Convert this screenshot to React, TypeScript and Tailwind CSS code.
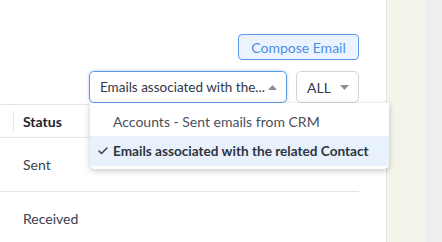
import { Check } from "lucide-react";

function Caret({ up }: { up?: boolean }) {
  return (
    <svg width="9" height="5" viewBox="0 0 9 5" className="shrink-0">
      {up ? <path d="M0 5 L4.5 0 L9 5 Z" fill="#8a8f96" /> : <path d="M0 0 L4.5 5 L9 0 Z" fill="#8a8f96" />}
    </svg>
  );
}

export default function App() {
  return (
    <div className="flex h-[242px] w-[442px] overflow-hidden font-['Lato',sans-serif] text-[#313949]">
      <div className="relative flex w-[387px] shrink-0 flex-col border-r border-[#e4e4e4] bg-white pt-[34px]">
        <div className="flex justify-end pr-[27px]">
          <button className="h-[26px] w-[121px] rounded-[4px] border border-[#5b9ae6] bg-[#eaf3fe] text-[14px] text-[#4a8fe3]">
            Compose Email
          </button>
        </div>

        <div className="mt-[11px] flex justify-end gap-[9px] pr-[27px]">
          <div className="relative">
            <div className="flex h-[32px] w-[198px] items-center justify-between rounded-[5px] border border-[#5b9ae6] pl-[10px] pr-[9px] text-[13.5px] shadow-[0_0_3px_rgba(74,143,227,0.5)]">
              <span className="whitespace-nowrap">Emails associated with the...</span>
              <Caret up />
            </div>
            <div className="absolute left-[1px] top-[32px] z-10 w-[299px] rounded-b-[5px] bg-white py-[3px] text-[14px] shadow-[0_2px_6px_rgba(0,0,0,0.22)]">
              <div className="flex h-[30px] items-center whitespace-nowrap pl-[23px] text-[#4b515c]">Accounts - Sent emails from CRM</div>
              <div className="flex h-[30px] items-center whitespace-nowrap bg-[#e8f1fc] pl-[7px] text-[13.6px] font-bold text-[#2f3542]">
                <Check size={12} strokeWidth={3} className="mr-[4px] text-[#3a3f4a]" />
                Emails associated with the related Contact
              </div>
            </div>
          </div>
          <div className="flex h-[32px] w-[63px] items-center justify-between rounded-[5px] border border-[#d0d4d9] pl-[10px] pr-[9px] text-[14px]">
            <span>ALL</span>
            <Caret />
          </div>
        </div>

        <div className="mr-[27px] mt-[1px] border-t border-[#e0e6ec]">
          <div className="flex h-[33px] items-center border-b border-[#e0e6ec]">
            <div className="ml-[13px] h-[20px] w-px bg-[#e0e6ec]" />
            <span className="ml-[9px] text-[14px] font-bold text-[#1f2430]">Status</span>
          </div>
          <div className="flex h-[54px] items-center border-b border-[#e0e6ec] pl-[23px] text-[14px] text-[#3a404c]">Sent</div>
          <div className="flex h-[52px] items-center pl-[23px] text-[14px] text-[#3a404c]">Received</div>
        </div>
      </div>
      <div className="w-[38px] shrink-0 bg-[#f4f4ea]" />
      <div className="flex-1 bg-[#efefef]" />
    </div>
  );
}
